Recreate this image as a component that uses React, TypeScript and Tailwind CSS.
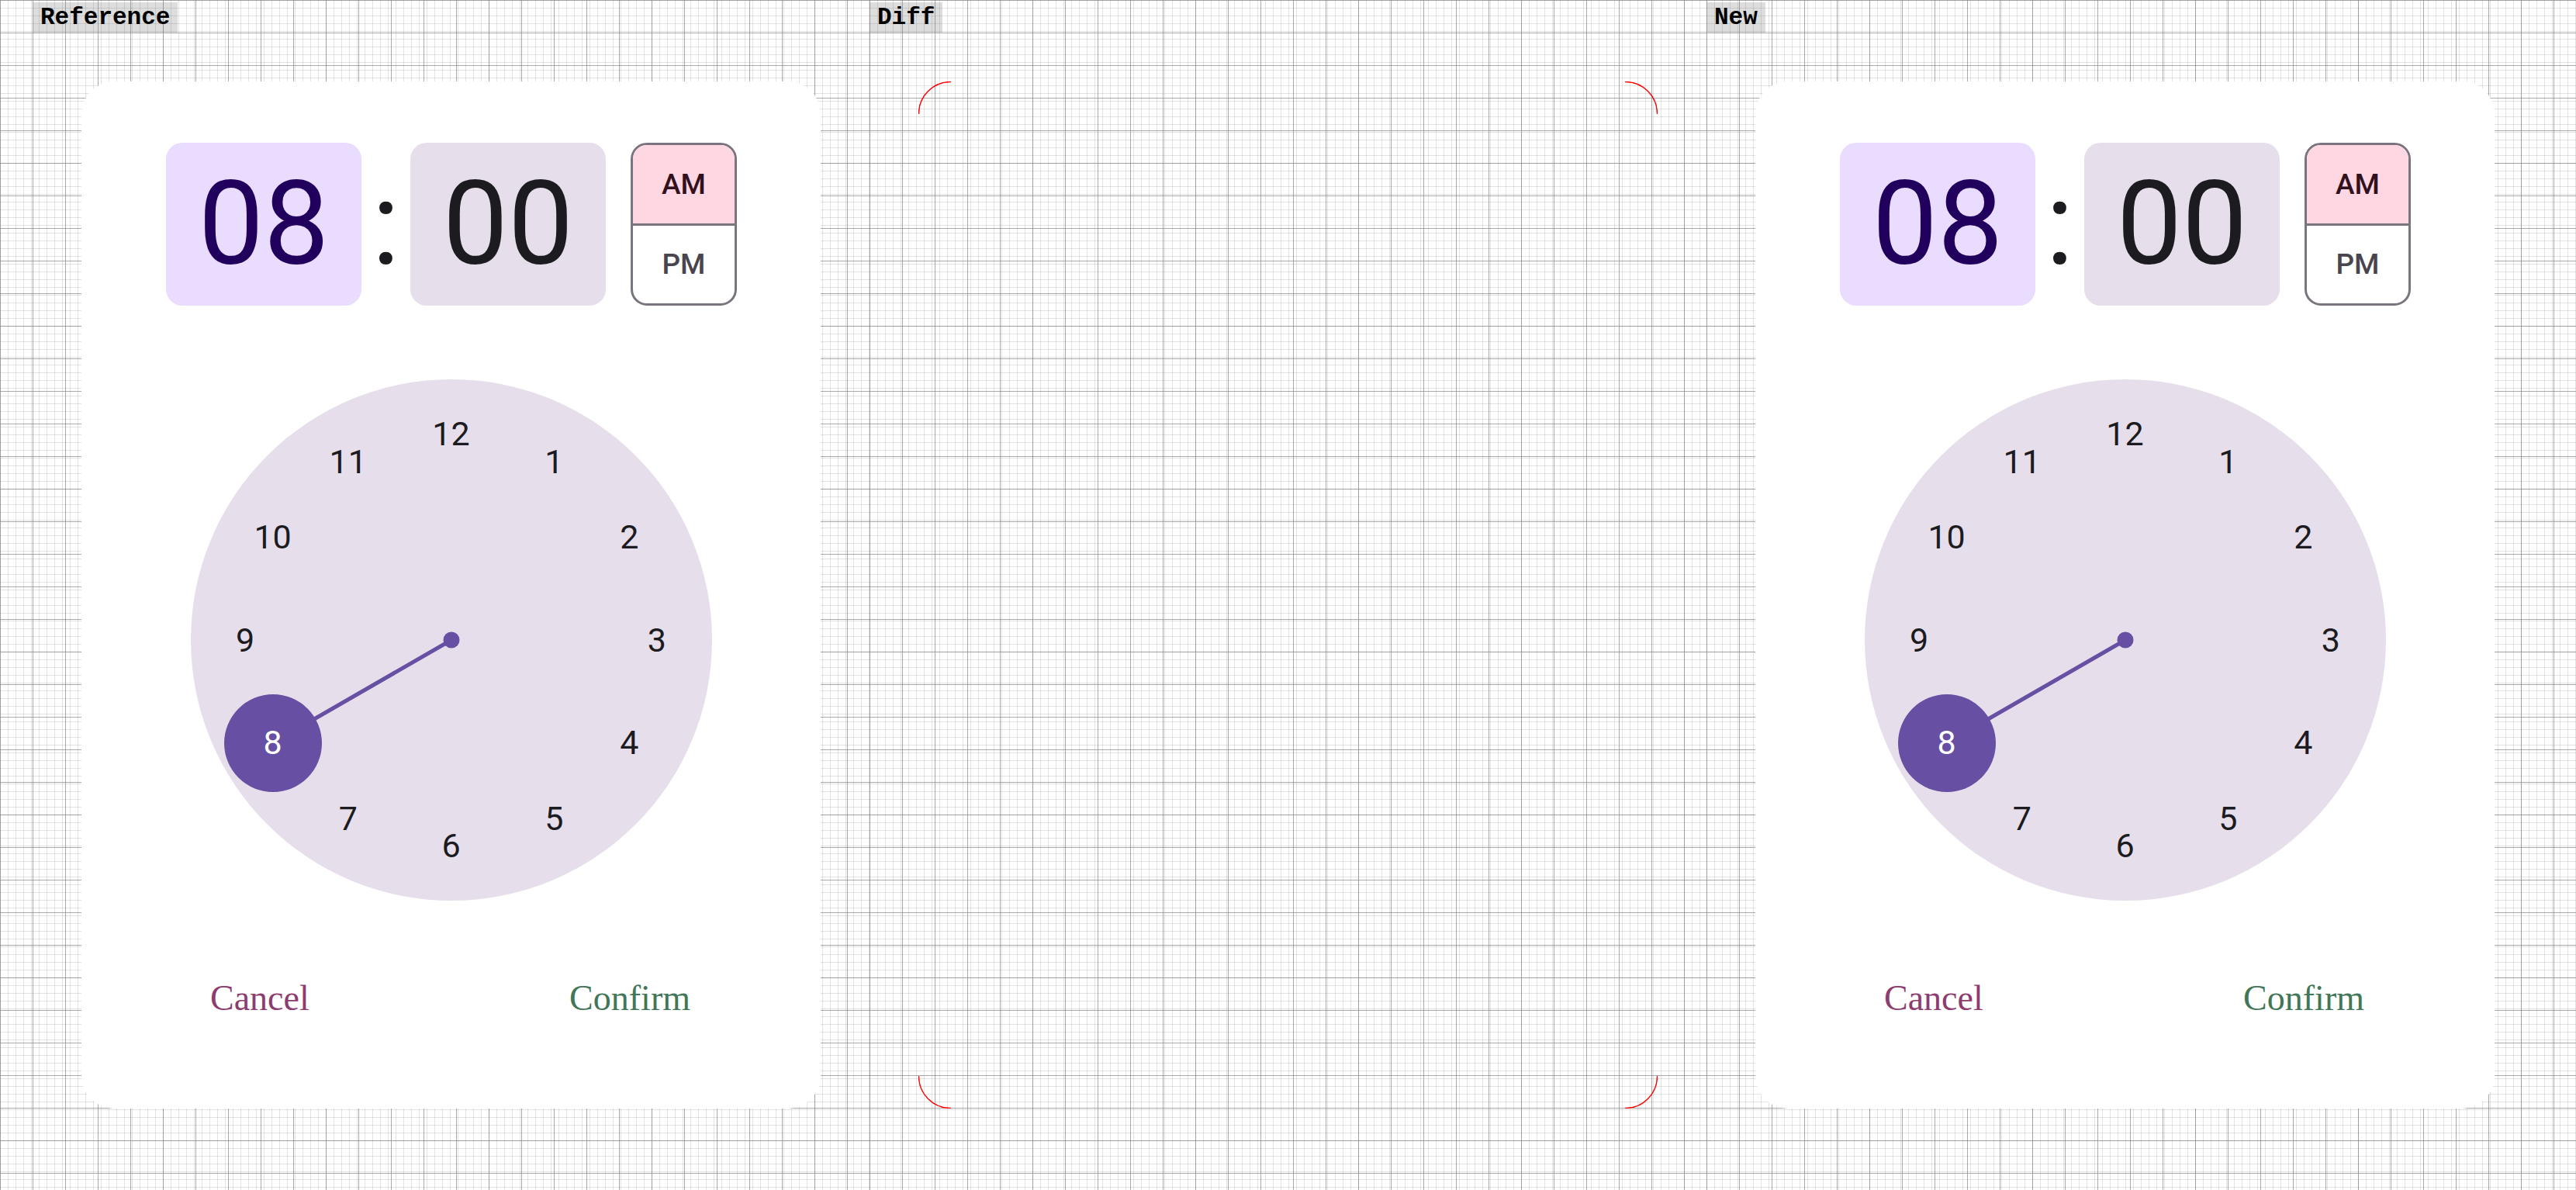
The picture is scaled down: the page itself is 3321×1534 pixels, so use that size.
function Clock() {
  return (
    <div className="relative mt-[95px] size-168 rounded-full bg-[#e6dfeb]">
      <svg viewBox="0 0 672 672" className="absolute inset-0 size-full" aria-hidden="true">
        <line x1="336" y1="336" x2="159" y2="438" stroke="#674fa3" strokeWidth="5" />
        <circle cx="336" cy="336" r="10.5" fill="#674fa3" />
        <circle cx="106" cy="469" r="63" fill="#674fa3" />
      </svg>
      {Array.from({ length: 12 }, (_, i) => {
        const hour = i + 1;
        const a = (hour * Math.PI) / 6;
        return (
          <button
            key={hour}
            type="button"
            className={`absolute flex size-[126px] -translate-x-1/2 -translate-y-1/2 items-center justify-center rounded-full text-[43px] ${hour === 8 ? "text-white" : "text-[#1c1b1f]"}`}
            style={{ left: `${50 + 39.5 * Math.sin(a)}%`, top: `${50 - 39.5 * Math.cos(a)}%` }}
          >
            {hour}
          </button>
        );
      })}
    </div>
  );
}

function TimePicker() {
  return (
    <section className="flex flex-col items-center rounded-[42px] bg-white pt-[79px] font-[Roboto,sans-serif]">
      <div className="flex h-[210px] pl-px text-[#1c1b1f]">
        <button type="button" className="w-[252px] rounded-[21px] bg-[#eadcff] text-[150px] leading-none text-[#21005d]">
          08
        </button>
        <span className="w-[63px] text-center text-[150px] leading-[210px]">:</span>
        <button type="button" className="w-[252px] rounded-[21px] bg-[#e6dfeb] text-[150px] leading-none">
          00
        </button>
        <div className="ml-8 flex w-[137px] flex-col overflow-hidden rounded-[21px] border-3 border-[#79747e] text-[37px] font-medium">
          <button type="button" className="flex-1 border-b-3 border-[#79747e] bg-[#ffd7e2] text-[#31111d]">
            AM
          </button>
          <button type="button" className="flex-1 text-[#49454f]">
            PM
          </button>
        </div>
      </div>
      <Clock />
      <div className="mt-[94px] flex w-full justify-between pr-[168px] pl-[166px] pb-[111px] font-['Liberation_Serif',serif] text-[46px] leading-[63px]">
        <button type="button" className="text-[#8d3c70]">Cancel</button>
        <button type="button" className="text-[#417657]">Confirm</button>
      </div>
    </section>
  );
}

function Corners() {
  return (
    <svg viewBox="0 0 953 1324" className="block w-full" fill="none" stroke="#ff0000" strokeWidth="1.4" aria-hidden="true">
      <path d="M.5 42V41A41 41 0 0 1 41 .5H42M911 .5H912A41 41 0 0 1 952.5 41V42M952.5 1282V1283A41 41 0 0 1 912 1323.5H911M42 1323.5H41A41 41 0 0 1 .5 1283V1282" />
    </svg>
  );
}

const grid =
  "bg-white bg-[linear-gradient(to_right,#7f7f7fa8_1px,transparent_1px),linear-gradient(to_bottom,#7f7f7fa8_1px,transparent_1px),linear-gradient(to_right,#7f7f7f38_1px,transparent_1px),linear-gradient(to_bottom,#7f7f7f38_1px,transparent_1px)] bg-size-[42px_42px,42px_42px,10px_10px,10px_10px]";

function PanelTitle({ children }: { children: string }) {
  return (
    <div className="h-[105px] pt-[3px]">
      <h2 className="w-fit bg-[#80808045] px-2.5 font-['Liberation_Mono',monospace] text-[31px] leading-[39px] font-bold text-black">
        {children}
      </h2>
    </div>
  );
}

export default function App() {
  return (
    <main className="grid min-h-screen grid-cols-[1121fr_1079fr_1121fr]">
      <div className={`${grid} pr-[63px] pl-[42px]`}>
        <PanelTitle>Reference</PanelTitle>
        <div className="pl-[63px]">
          <TimePicker />
        </div>
      </div>
      <div className={`${grid} pr-[63px]`}>
        <PanelTitle>Diff</PanelTitle>
        <div className="pl-[63px]">
          <Corners />
        </div>
      </div>
      <div className={`${grid} pr-[105px]`}>
        <PanelTitle>New</PanelTitle>
        <div className="pl-[63px]">
          <TimePicker />
        </div>
      </div>
    </main>
  );
}
